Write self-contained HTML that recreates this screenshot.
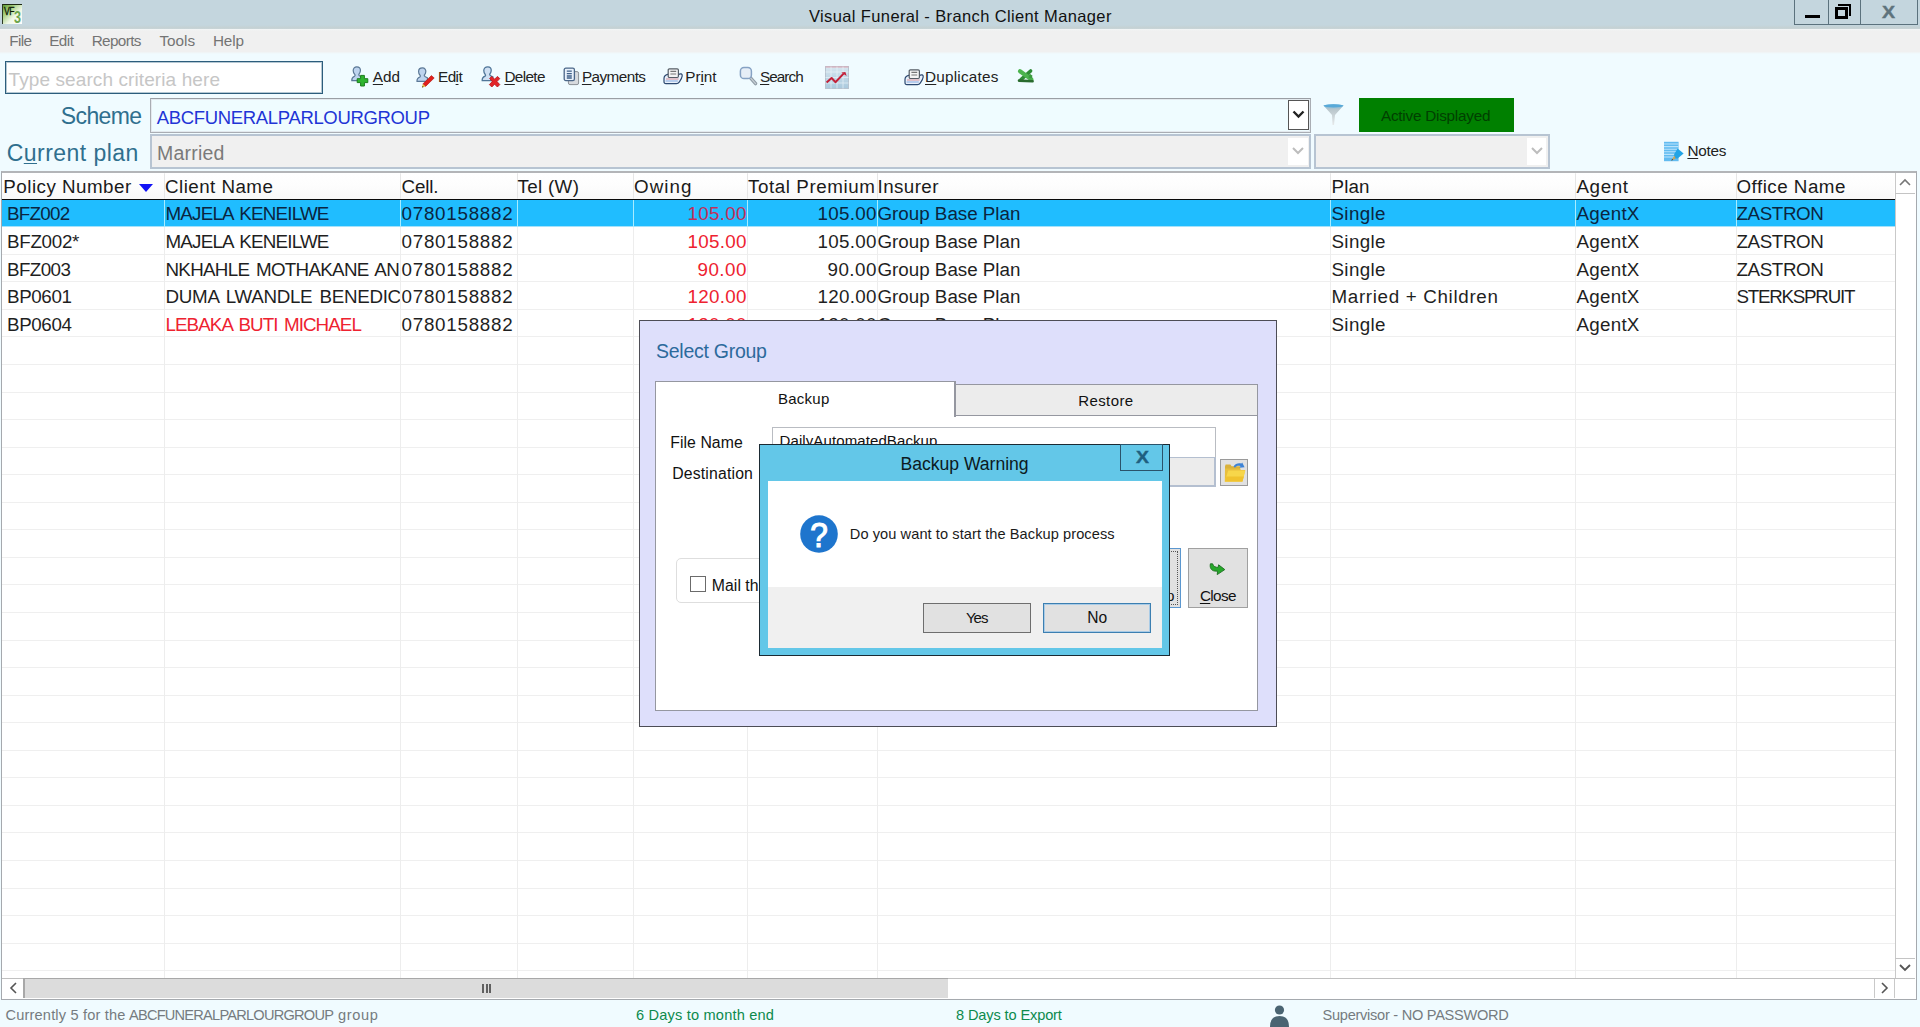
<!DOCTYPE html>
<html lang="en">
<head>
<meta charset="utf-8">
<title>Visual Funeral - Branch Client Manager</title>
<style>
*{box-sizing:border-box;margin:0;padding:0}
html,body{width:1920px;height:1027px;overflow:hidden;background:#f0fbff;font-family:"Liberation Sans",sans-serif}
#app{position:absolute;left:0;top:0;width:1920px;height:1027px;overflow:hidden;background:#f0fbff}
.a{position:absolute}
.t{position:absolute;white-space:nowrap;font-family:"Liberation Sans",sans-serif}
.t u{text-decoration:underline;text-underline-offset:2px;text-decoration-thickness:1px}
svg{position:absolute;overflow:visible}
</style>
</head>
<body>
<div id="app">
<!-- title bar -->
<div class="a" style="left:0;top:0;width:1920px;height:29px;background:linear-gradient(#c4d6de 0,#c4d6de 86%,#c5d1d3 96%,#c9d6d9 100%)"></div>
<div class="a" style="left:0;top:29px;width:1920px;height:25px;background:linear-gradient(#f3f6f7 0,#f0f0f0 8%,#f0f0f0 90%,#f0fbff 100%)"></div>
<!-- window controls -->
<div class="a" style="left:1794px;top:-1px;width:124px;height:26px;border:1px solid #5b727d"></div>
<div class="a" style="left:1828px;top:0;width:1px;height:24px;background:#5b727d"></div>
<div class="a" style="left:1860px;top:0;width:1px;height:24px;background:#5b727d"></div>
<div class="a" style="left:1805px;top:15px;width:15px;height:3px;background:#000"></div>
<div class="a" style="left:1838px;top:4px;width:13px;height:12px;border-top:2px solid #000;border-right:2px solid #000"></div>
<div class="a" style="left:1835px;top:7px;width:13px;height:12px;border:3px solid #000;background:#c4d6de"></div>
<span class="t" style="left:1878px;top:3px;width:21px;text-align:center;font-size:16.8px;line-height:20px;font-weight:700;color:#5e737c;-webkit-text-stroke:0.4px #5e737c;transform:scaleX(1.17)">X</span>
<!-- app icon -->
<div class="a" style="left:2px;top:4px;width:20px;height:20px;background:linear-gradient(135deg,#5f9d33 0,#a9d083 30%,#eef7e6 60%,#ffffff 100%);border-top:1px solid #1d2a14;border-left:1px solid #2d3a24"></div>
<span class="t" style="left:3.8px;top:4.6px;font-size:11.6px;line-height:11px;font-weight:400;color:#0c1a06;letter-spacing:-0.5px;-webkit-text-stroke:0.35px #0c1a06;transform:scaleX(0.74);transform-origin:0 0">VF</span>
<span class="t" style="left:14.2px;top:9.6px;font-size:16.6px;line-height:16px;font-weight:700;color:#6da64d;transform:scaleX(0.76);transform-origin:0 0">3</span>

<!-- search box -->
<div class="a" style="left:5px;top:61px;width:318px;height:33px;background:#fff;border:1px solid #2c5d7c;box-shadow:inset 0 0 0 1px rgba(60,110,140,0.38)"></div>

<!-- Scheme combobox -->
<div class="a" style="left:150px;top:98px;width:1161px;height:35px;background:#effcff;border:1px solid #a9adb3;border-top-color:#9a9ea4;box-shadow:inset 0 0 0 1px #e3e9ee"></div>
<div class="a" style="left:1288px;top:100px;width:21px;height:30px;background:#fff;border:1px solid #555"></div>
<svg style="left:1292px;top:110px" width="13" height="9" viewBox="0 0 13 9"><path d="M1.5 1.5 L6.5 6.5 L11.5 1.5" stroke="#222" stroke-width="2.4" fill="none"/></svg>
<!-- filter icon -->
<svg style="left:1323px;top:104px" width="21" height="22" viewBox="0 0 21 22"><defs><linearGradient id="fg" x1="0" y1="0" x2="0" y2="1"><stop offset="0" stop-color="#6fb7dd"/><stop offset="0.25" stop-color="#b9c6cc"/><stop offset="1" stop-color="#e6e9ea"/></linearGradient></defs><path d="M0.5 1.5 Q10.5 -1 20.5 1.5 L12 11 L11 21 L9.5 21 L9 11 Z" fill="url(#fg)"/><ellipse cx="10.5" cy="1.8" rx="10" ry="1.6" fill="#58a9d8"/></svg>
<!-- active displayed -->
<div class="a" style="left:1359px;top:98px;width:155px;height:34px;background:#008000"></div>

<!-- Current plan combobox -->
<div class="a" style="left:150px;top:134px;width:1161px;height:35px;background:#f0f0f0;border:2px solid #b7c4d2"></div>
<div class="a" style="left:1288px;top:138px;width:20px;height:27px;background:#fff"></div>
<svg style="left:1292px;top:147px" width="12" height="8" viewBox="0 0 12 8"><path d="M1 1 L6 6 L11 1" stroke="#bdbdbd" stroke-width="2" fill="none"/></svg>
<div class="a" style="left:1314px;top:134px;width:236px;height:35px;background:#f0f0f0;border:2px solid #b7c4d2"></div>
<div class="a" style="left:1527px;top:138px;width:19px;height:27px;background:#fff"></div>
<svg style="left:1531px;top:147px" width="12" height="8" viewBox="0 0 12 8"><path d="M1 1 L6 6 L11 1" stroke="#bdbdbd" stroke-width="2" fill="none"/></svg>

<!-- grid -->
<div class="a" id="grid" style="left:1px;top:171px;width:1916px;height:829px;background:#fff;border:1px solid #a5a9ae;border-top:2px solid #b3b5b8"></div>
<div class="a" style="left:2px;top:173px;width:1892px;height:26px;background:linear-gradient(#ffffff 0,#fdfdfd 50%,#f8f8f8 100%)"></div>
<div class="a" style="left:2px;top:226px;width:1893px;height:1px;background:#efefef"></div>
<div class="a" style="left:2px;top:254px;width:1893px;height:1px;background:#efefef"></div>
<div class="a" style="left:2px;top:281px;width:1893px;height:1px;background:#efefef"></div>
<div class="a" style="left:2px;top:309px;width:1893px;height:1px;background:#efefef"></div>
<div class="a" style="left:2px;top:336px;width:1893px;height:1px;background:#efefef"></div>
<div class="a" style="left:2px;top:364px;width:1893px;height:1px;background:#efefef"></div>
<div class="a" style="left:2px;top:392px;width:1893px;height:1px;background:#efefef"></div>
<div class="a" style="left:2px;top:419px;width:1893px;height:1px;background:#efefef"></div>
<div class="a" style="left:2px;top:447px;width:1893px;height:1px;background:#efefef"></div>
<div class="a" style="left:2px;top:474px;width:1893px;height:1px;background:#efefef"></div>
<div class="a" style="left:2px;top:502px;width:1893px;height:1px;background:#efefef"></div>
<div class="a" style="left:2px;top:529px;width:1893px;height:1px;background:#efefef"></div>
<div class="a" style="left:2px;top:557px;width:1893px;height:1px;background:#efefef"></div>
<div class="a" style="left:2px;top:584px;width:1893px;height:1px;background:#efefef"></div>
<div class="a" style="left:2px;top:612px;width:1893px;height:1px;background:#efefef"></div>
<div class="a" style="left:2px;top:640px;width:1893px;height:1px;background:#efefef"></div>
<div class="a" style="left:2px;top:667px;width:1893px;height:1px;background:#efefef"></div>
<div class="a" style="left:2px;top:695px;width:1893px;height:1px;background:#efefef"></div>
<div class="a" style="left:2px;top:722px;width:1893px;height:1px;background:#efefef"></div>
<div class="a" style="left:2px;top:750px;width:1893px;height:1px;background:#efefef"></div>
<div class="a" style="left:2px;top:777px;width:1893px;height:1px;background:#efefef"></div>
<div class="a" style="left:2px;top:805px;width:1893px;height:1px;background:#efefef"></div>
<div class="a" style="left:2px;top:832px;width:1893px;height:1px;background:#efefef"></div>
<div class="a" style="left:2px;top:860px;width:1893px;height:1px;background:#efefef"></div>
<div class="a" style="left:2px;top:888px;width:1893px;height:1px;background:#efefef"></div>
<div class="a" style="left:2px;top:915px;width:1893px;height:1px;background:#efefef"></div>
<div class="a" style="left:2px;top:943px;width:1893px;height:1px;background:#efefef"></div>
<div class="a" style="left:2px;top:970px;width:1893px;height:1px;background:#efefef"></div>
<div class="a" style="left:164.0px;top:173px;width:1px;height:805px;background:#ededed"></div>
<div class="a" style="left:164.0px;top:174px;width:1px;height:24px;background:#e6e6e6"></div>
<div class="a" style="left:400.0px;top:173px;width:1px;height:805px;background:#ededed"></div>
<div class="a" style="left:400.0px;top:174px;width:1px;height:24px;background:#e6e6e6"></div>
<div class="a" style="left:516.5px;top:173px;width:1px;height:805px;background:#ededed"></div>
<div class="a" style="left:516.5px;top:174px;width:1px;height:24px;background:#e6e6e6"></div>
<div class="a" style="left:633.0px;top:173px;width:1px;height:805px;background:#ededed"></div>
<div class="a" style="left:633.0px;top:174px;width:1px;height:24px;background:#e6e6e6"></div>
<div class="a" style="left:747.0px;top:173px;width:1px;height:805px;background:#ededed"></div>
<div class="a" style="left:747.0px;top:174px;width:1px;height:24px;background:#e6e6e6"></div>
<div class="a" style="left:877.0px;top:173px;width:1px;height:805px;background:#ededed"></div>
<div class="a" style="left:877.0px;top:174px;width:1px;height:24px;background:#e6e6e6"></div>
<div class="a" style="left:1330.0px;top:173px;width:1px;height:805px;background:#ededed"></div>
<div class="a" style="left:1330.0px;top:174px;width:1px;height:24px;background:#e6e6e6"></div>
<div class="a" style="left:1575.0px;top:173px;width:1px;height:805px;background:#ededed"></div>
<div class="a" style="left:1575.0px;top:174px;width:1px;height:24px;background:#e6e6e6"></div>
<div class="a" style="left:1735.5px;top:173px;width:1px;height:805px;background:#ededed"></div>
<div class="a" style="left:1735.5px;top:174px;width:1px;height:24px;background:#e6e6e6"></div>
<!-- selected row -->
<div class="a" style="left:2px;top:199px;width:1893px;height:1px;background:#0a0a0a"></div>
<div class="a" style="left:2px;top:200px;width:1893px;height:26px;background:#20bdff"></div>
<div class="a" style="left:2px;top:226px;width:1893px;height:1px;background:#a4e2fb"></div>
<div class="a" style="left:164.0px;top:200px;width:1px;height:26.5px;background:#a8ecff"></div>
<div class="a" style="left:400.0px;top:200px;width:1px;height:26.5px;background:#a8ecff"></div>
<div class="a" style="left:516.5px;top:200px;width:1px;height:26.5px;background:#a8ecff"></div>
<div class="a" style="left:633.0px;top:200px;width:1px;height:26.5px;background:#a8ecff"></div>
<div class="a" style="left:747.0px;top:200px;width:1px;height:26.5px;background:#a8ecff"></div>
<div class="a" style="left:877.0px;top:200px;width:1px;height:26.5px;background:#a8ecff"></div>
<div class="a" style="left:1330.0px;top:200px;width:1px;height:26.5px;background:#a8ecff"></div>
<div class="a" style="left:1575.0px;top:200px;width:1px;height:26.5px;background:#a8ecff"></div>
<div class="a" style="left:1735.5px;top:200px;width:1px;height:26.5px;background:#a8ecff"></div>
<!-- sort triangle -->
<svg style="left:138.5px;top:184px" width="14" height="8" viewBox="0 0 14 8"><path d="M0 0 L14 0 L7 8 Z" fill="#1212f5"/></svg>
<!-- v scrollbar -->
<div class="a" style="left:1895px;top:173px;width:20px;height:806px;background:#fff;border-left:1px solid #c9c9c9"></div>
<div class="a" style="left:1895px;top:193px;width:20px;height:1px;background:#c4c4c4"></div>
<div class="a" style="left:1895px;top:958px;width:20px;height:1px;background:#c4c4c4"></div>
<svg style="left:1899px;top:178px" width="12" height="8" viewBox="0 0 12 8"><path d="M1 7 L6 2 L11 7" stroke="#777" stroke-width="1.6" fill="none"/></svg>
<svg style="left:1899px;top:964px" width="12" height="8" viewBox="0 0 12 8"><path d="M1 1 L6 6 L11 1" stroke="#555" stroke-width="1.8" fill="none"/></svg>
<!-- h scrollbar -->
<div class="a" style="left:2px;top:978px;width:1913px;height:1px;background:#c0c0c0"></div>
<div class="a" style="left:2px;top:979px;width:1893px;height:19px;background:#fff"></div>
<div class="a" style="left:23px;top:978px;width:925px;height:20px;background:#dcdcdc;border-left:2px solid #a8a8a8;border-top:1px solid #a8a8a8"></div>
<div class="a" style="left:1874px;top:979px;width:1px;height:19px;background:#c9c9c9"></div>
<div class="a" style="left:1894px;top:979px;width:1px;height:19px;background:#c9c9c9"></div>
<svg style="left:9px;top:982px" width="8" height="12" viewBox="0 0 8 12"><path d="M7 1 L2 6 L7 11" stroke="#555" stroke-width="1.6" fill="none"/></svg>
<svg style="left:1881px;top:982px" width="8" height="12" viewBox="0 0 8 12"><path d="M1 1 L6 6 L1 11" stroke="#555" stroke-width="1.6" fill="none"/></svg>
<div class="a" style="left:482px;top:984px;width:2px;height:9px;background:#606060"></div>
<div class="a" style="left:485.5px;top:984px;width:2px;height:9px;background:#606060"></div>
<div class="a" style="left:489px;top:984px;width:2px;height:9px;background:#606060"></div>
<!-- status user icon -->
<svg style="left:1270px;top:1005px" width="19" height="22" viewBox="0 0 19 22"><circle cx="9.5" cy="5" r="4.6" fill="#4a6472"/><path d="M0 22 Q0 11 9.5 11 Q19 11 19 22 Z" fill="#4a6472"/></svg>
<!-- Add icon -->
<svg style="left:351px;top:66px" width="19" height="22" viewBox="0 0 19 22">
<path d="M5.8 0.8 C8.3 0.8 9.6 2.6 9.4 4.8 C9.3 6.6 8.4 7.6 7.8 8.4 C7.6 9.4 8.6 10.2 10.6 11 L10.6 14.6 L0.8 14.6 C0.6 12.4 1.2 11.2 3.6 10.2 C4.2 9.6 4.2 8.8 3.6 8.2 C2.8 7.4 2.2 6.2 2.2 4.6 C2.2 2.4 3.6 0.8 5.8 0.8 Z" fill="#bdd3ee" stroke="#5b7896" stroke-width="1.2"/>
<path d="M9.6 9.4 h3.8 v3.3 h3.4 v3.9 h-3.4 v3.4 h-3.8 v-3.4 h-3.4 v-3.9 h3.4 Z" fill="#2fb52f" stroke="#1c7d1c" stroke-width="1" stroke-linejoin="round"/>
</svg>
<!-- Edit icon -->
<svg style="left:416px;top:67px" width="19" height="21" viewBox="0 0 19 21">
<path d="M6.4 0.9 C8.8 0.9 10 2.6 9.8 4.7 C9.7 6.4 8.9 7.4 8.3 8.1 C8.1 9.1 9.1 9.9 11.4 10.8 L11.4 14.4 L1 14.4 C0.8 12.2 1.4 11 3.9 10 C4.5 9.4 4.5 8.6 3.9 8 C3.1 7.2 2.6 6 2.6 4.5 C2.6 2.4 4 0.9 6.4 0.9 Z" fill="#bdd3ee" stroke="#5b7896" stroke-width="1.2"/>
<path d="M15.4 8.6 L18.2 11 L9.6 19.4 L6.8 17 Z" fill="#e0201c" stroke="#b01410" stroke-width="0.6"/>
<path d="M6.8 17 L9.6 19.4 L6 20.6 Z" fill="#f0c040"/>
<path d="M6 20.6 L6.6 19 L7.6 19.9 Z" fill="#222"/>
</svg>
<!-- Delete icon -->
<svg style="left:481px;top:66px" width="20" height="23" viewBox="0 0 20 23">
<path d="M6.8 0.8 C9.2 0.8 10.4 2.6 10.2 4.7 C10.1 6.4 9.3 7.4 8.7 8.1 C8.5 9.1 9.5 9.9 11.8 10.8 L11.8 14.6 L1.2 14.6 C1 12.4 1.6 11.2 4.1 10.2 C4.7 9.6 4.7 8.8 4.1 8.2 C3.3 7.4 2.8 6.2 2.8 4.6 C2.8 2.4 4.2 0.8 6.8 0.8 Z" fill="#cfe0f3" stroke="#4f7598" stroke-width="1.3"/>
<path d="M8.6 12.4 L10.8 10.4 L13.6 13.2 L16.4 10.4 L18.8 12.6 L16 15.6 L18.8 18.6 L16.4 21 L13.6 18.2 L10.8 21 L8.4 18.6 L11.2 15.6 Z" fill="#e22428" stroke="#b8141a" stroke-width="0.8" stroke-linejoin="round"/>
</svg>
<!-- Payments icon -->
<svg style="left:563px;top:67px" width="17" height="19" viewBox="0 0 17 19">
<rect x="5.4" y="4.6" width="10.2" height="13" rx="1.6" fill="#d7dade" stroke="#8b9096" stroke-width="1"/>
<rect x="1.2" y="1.2" width="10.2" height="12.4" rx="1.6" fill="#e8f1fb" stroke="#4a6688" stroke-width="1.3"/>
<path d="M3.8 4.2 h5 M3.8 6.6 h5 M3.8 9 h5 M3.8 11 h5" stroke="#3e5f88" stroke-width="1.3"/>
</svg>
<!-- Print icon -->
<svg style="left:663px;top:68px" width="20" height="17" viewBox="0 0 20 17">
<path d="M1 10.4 C1 8.2 2.4 7 4.6 6.4 L15.4 6.4 C17.8 5.2 19.4 5.8 19.2 8 C19 10 18 11.6 16.4 13.8 C15.6 15 14.8 15.6 13.4 15.6 L3 15.6 C1.6 15.6 1 14.8 1 13.4 Z" fill="#e9f1fb" stroke="#2c4870" stroke-width="1.2"/>
<rect x="5.2" y="0.9" width="10.2" height="8.6" rx="1.2" fill="#f4f4f4" stroke="#555d66" stroke-width="1.2"/>
<path d="M7.4 3.4 h5.8 M7.4 6 h5.8" stroke="#777" stroke-width="1.1"/>
<path d="M3 11 L15.6 11" stroke="#d9a0a8" stroke-width="1.2"/>
<path d="M2.6 13 L14.8 13" stroke="#a8c4ea" stroke-width="1.6"/>
</svg>
<!-- Search icon -->
<svg style="left:739px;top:66px" width="19" height="20" viewBox="0 0 19 20">
<path d="M10.4 10.6 L16.6 17.6" stroke="#8e9aa4" stroke-width="3.4" stroke-linecap="round"/>
<path d="M10.4 10.6 L16.6 17.6" stroke="#c6ced4" stroke-width="1.4" stroke-linecap="round"/>
<rect x="1.4" y="1.6" width="11" height="11" rx="3.6" fill="#e6eef7" stroke="#86a2c4" stroke-width="1.5"/>
</svg>
<!-- Chart icon -->
<svg style="left:825px;top:66px" width="24" height="23" viewBox="0 0 24 23">
<defs><linearGradient id="cg" x1="0" y1="0" x2="0" y2="1"><stop offset="0" stop-color="#d7e6ef"/><stop offset="1" stop-color="#a9c9dd"/></linearGradient></defs>
<rect x="0.5" y="0.5" width="23" height="22" fill="url(#cg)" stroke="#b7c3cf" stroke-width="1"/>
<path d="M0.5 1 h23" stroke="#e0a6b2" stroke-width="1"/>
<path d="M6 0.5 v22 M12 0.5 v22 M18 0.5 v22 M0.5 6 h23 M0.5 11.5 h23 M0.5 17 h23" stroke="#eef5fa" stroke-width="0.8" opacity="0.8"/>
<path d="M1.6 16.6 L6.6 12 L10.4 16.2 L18.6 7.6" stroke="#c32038" stroke-width="2" fill="none" stroke-linejoin="round"/>
<path d="M16.4 6.6 L20.4 6 L21.6 10 Z" fill="#c32038"/>
</svg>
<!-- Duplicates printer -->
<svg style="left:903.5px;top:68.5px" width="20" height="17" viewBox="0 0 20 17">
<path d="M1 10.4 C1 8.2 2.4 7 4.6 6.4 L15.4 6.4 C17.8 5.2 19.4 5.8 19.2 8 C19 10 18 11.6 16.4 13.8 C15.6 15 14.8 15.6 13.4 15.6 L3 15.6 C1.6 15.6 1 14.8 1 13.4 Z" fill="#e9f1fb" stroke="#2c4870" stroke-width="1.2"/>
<rect x="5.2" y="0.9" width="10.2" height="8.6" rx="1.2" fill="#f4f4f4" stroke="#555d66" stroke-width="1.2"/>
<path d="M7.4 3.4 h5.8 M7.4 6 h5.8" stroke="#777" stroke-width="1.1"/>
<path d="M3 11 L15.6 11" stroke="#d9a0a8" stroke-width="1.2"/>
<path d="M2.6 13 L14.8 13" stroke="#a8c4ea" stroke-width="1.6"/>
</svg>
<!-- Excel icon -->
<svg style="left:1017px;top:69px" width="18" height="15" viewBox="0 0 18 15">
<path d="M13.6 2 L4 10.6" stroke="#2e8b36" stroke-width="3.6" stroke-linecap="round"/>
<path d="M3 2.2 L14.4 10.4" stroke="#4cb44e" stroke-width="4.2" stroke-linecap="round"/>
<path d="M12.2 5.6 L15 7.6 M11.6 8.2 L15.2 8.2" stroke="#3c9a40" stroke-width="2"/>
<path d="M2 11.6 L15.6 12.2" stroke="#2a6b2e" stroke-width="2.6" stroke-linecap="round"/>
</svg>
<!-- Notes icon -->
<svg style="left:1663px;top:141px" width="22" height="21" viewBox="0 0 22 21">
<rect x="1" y="0.8" width="14.6" height="19.4" fill="#62bbf0"/>
<path d="M1 3 h14.6 M1 5.6 h14.6 M1 8.2 h14.6 M1 10.8 h14.6 M1 13.4 h14.6 M1 16 h14.6" stroke="#b9e3fb" stroke-width="1.1"/>
<path d="M14.6 7.4 L20.6 12.6 L14.6 17.6 L11 17.6 L11 13.6 Z" fill="#22a4e6"/>
<path d="M11.6 14.6 L8.2 19.6 L12.6 17.8 Z" fill="#c9a45a"/>
<path d="M8.2 19.6 L9.2 18 L10 18.9 Z" fill="#222"/>
</svg>

<span class="t" style="left:809.0px;top:5.8px;font-size:16.5px;line-height:21px;letter-spacing:0.373px;color:#111;">Visual Funeral - Branch Client Manager</span>
<span class="t" style="left:9.2px;top:31.0px;font-size:15.3px;line-height:20px;letter-spacing:-0.649px;color:#747474;">File</span>
<span class="t" style="left:49.2px;top:31.0px;font-size:15.3px;line-height:20px;letter-spacing:-0.553px;color:#747474;">Edit</span>
<span class="t" style="left:91.7px;top:31.0px;font-size:15.3px;line-height:20px;letter-spacing:-0.627px;color:#747474;">Reports</span>
<span class="t" style="left:159.4px;top:31.0px;font-size:15.3px;line-height:20px;letter-spacing:0.023px;color:#747474;">Tools</span>
<span class="t" style="left:213.0px;top:31.0px;font-size:15.3px;line-height:20px;letter-spacing:-0.187px;color:#747474;">Help</span>
<span class="t" style="left:8.5px;top:67.2px;font-size:19px;line-height:25px;letter-spacing:0.100px;color:#c6c6c6;">Type search criteria here</span>
<span class="t" style="left:372.8px;top:66.7px;font-size:15.3px;line-height:20px;letter-spacing:-0.009px;color:#222;"><u>A</u>dd</span>
<span class="t" style="left:438.0px;top:66.7px;font-size:15.3px;line-height:20px;letter-spacing:-0.553px;color:#222;">Ed<u>i</u>t</span>
<span class="t" style="left:504.4px;top:66.7px;font-size:15.3px;line-height:20px;letter-spacing:-0.644px;color:#222;"><u>D</u>elete</span>
<span class="t" style="left:581.9px;top:66.7px;font-size:15.3px;line-height:20px;letter-spacing:-0.559px;color:#222;"><u>P</u>ayments</span>
<span class="t" style="left:685.2px;top:66.7px;font-size:15.3px;line-height:20px;letter-spacing:-0.013px;color:#222;">Pr<u>i</u>nt</span>
<span class="t" style="left:760.0px;top:66.7px;font-size:15.3px;line-height:20px;letter-spacing:-0.954px;color:#222;"><u>S</u>earch</span>
<span class="t" style="left:925.0px;top:66.7px;font-size:15.3px;line-height:20px;letter-spacing:0.220px;color:#222;"><u>D</u>uplicates</span>
<span class="t" style="left:1687.4px;top:140.9px;font-size:15.3px;line-height:20px;letter-spacing:-0.240px;color:#222;"><u>N</u>otes</span>
<span class="t" style="left:60.8px;top:101.0px;font-size:23px;line-height:30px;letter-spacing:-0.615px;color:#2f6f8e;">Scheme</span>
<span class="t" style="left:6.7px;top:137.5px;font-size:23px;line-height:30px;letter-spacing:0.467px;color:#2f6f8e;">C<u>u</u>rrent plan</span>
<span class="t" style="left:156.7px;top:105.5px;font-size:18.5px;line-height:24px;letter-spacing:-0.333px;color:#1f35d6;">ABCFUNERALPARLOURGROUP</span>
<span class="t" style="left:157.0px;top:141.0px;font-size:19.5px;line-height:25px;letter-spacing:0.217px;color:#7a7a7a;">Married</span>
<span class="t" style="left:1381.0px;top:105.5px;font-size:15.3px;line-height:20px;letter-spacing:-0.245px;color:#003f00;">Active Displayed</span>
<span class="t" style="left:3.3px;top:175.0px;font-size:18.8px;line-height:24px;letter-spacing:0.482px;color:#1a1a1a;">Policy Number</span>
<span class="t" style="left:165.0px;top:175.0px;font-size:18.8px;line-height:24px;letter-spacing:0.457px;color:#1a1a1a;">Client Name</span>
<span class="t" style="left:401.5px;top:175.0px;font-size:18.8px;line-height:24px;letter-spacing:-0.168px;color:#1a1a1a;">Cell.</span>
<span class="t" style="left:517.5px;top:175.0px;font-size:18.8px;line-height:24px;letter-spacing:0.323px;color:#1a1a1a;">Tel (W)</span>
<span class="t" style="left:634.0px;top:175.0px;font-size:18.8px;line-height:24px;letter-spacing:1.041px;color:#1a1a1a;">Owing</span>
<span class="t" style="left:748.0px;top:175.0px;font-size:18.8px;line-height:24px;letter-spacing:0.573px;color:#1a1a1a;">Total Premium</span>
<span class="t" style="left:877.5px;top:175.0px;font-size:18.8px;line-height:24px;letter-spacing:0.408px;color:#1a1a1a;">Insurer</span>
<span class="t" style="left:1331.5px;top:175.0px;font-size:18.8px;line-height:24px;letter-spacing:0.103px;color:#1a1a1a;">Plan</span>
<span class="t" style="left:1576.5px;top:175.0px;font-size:18.8px;line-height:24px;letter-spacing:0.580px;color:#1a1a1a;">Agent</span>
<span class="t" style="left:1736.5px;top:175.0px;font-size:18.8px;line-height:24px;letter-spacing:0.487px;color:#1a1a1a;">Office Name</span>
<span class="t" style="left:7.0px;top:202.4px;font-size:18.8px;line-height:24px;letter-spacing:-0.721px;color:#0b2540;">BFZ002</span>
<span class="t" style="left:165.5px;top:202.4px;font-size:18.8px;line-height:24px;letter-spacing:-0.803px;color:#0b2540;word-spacing:2.2px;width:234px;overflow:hidden;">MAJELA KENEILWE</span>
<span class="t" style="left:401.5px;top:202.4px;font-size:18.8px;line-height:24px;letter-spacing:0.750px;color:#0b2540;">0780158882</span>
<span class="t" style="left:687.5px;top:202.4px;font-size:18.8px;line-height:24px;letter-spacing:0.291px;color:#c2305a;">105.00</span>
<span class="t" style="left:817.5px;top:202.4px;font-size:18.8px;line-height:24px;letter-spacing:0.291px;color:#0b2540;">105.00</span>
<span class="t" style="left:877.5px;top:202.4px;font-size:18.8px;line-height:24px;letter-spacing:-0.009px;color:#0b2540;">Group Base Plan</span>
<span class="t" style="left:1331.5px;top:202.4px;font-size:18.8px;line-height:24px;letter-spacing:0.338px;color:#0b2540;">Single</span>
<span class="t" style="left:1576.5px;top:202.4px;font-size:18.8px;line-height:24px;letter-spacing:0.258px;color:#0b2540;">AgentX</span>
<span class="t" style="left:1736.5px;top:202.4px;font-size:18.8px;line-height:24px;letter-spacing:-0.389px;color:#0b2540;">ZASTRON</span>
<span class="t" style="left:7.0px;top:230.0px;font-size:18.8px;line-height:24px;letter-spacing:-0.286px;color:#1f1f1f;">BFZ002*</span>
<span class="t" style="left:165.5px;top:230.0px;font-size:18.8px;line-height:24px;letter-spacing:-0.803px;color:#1f1f1f;word-spacing:2.2px;width:234px;overflow:hidden;">MAJELA KENEILWE</span>
<span class="t" style="left:401.5px;top:230.0px;font-size:18.8px;line-height:24px;letter-spacing:0.750px;color:#1f1f1f;">0780158882</span>
<span class="t" style="left:687.5px;top:230.0px;font-size:18.8px;line-height:24px;letter-spacing:0.291px;color:#ee2230;">105.00</span>
<span class="t" style="left:817.5px;top:230.0px;font-size:18.8px;line-height:24px;letter-spacing:0.291px;color:#1f1f1f;">105.00</span>
<span class="t" style="left:877.5px;top:230.0px;font-size:18.8px;line-height:24px;letter-spacing:-0.009px;color:#1f1f1f;">Group Base Plan</span>
<span class="t" style="left:1331.5px;top:230.0px;font-size:18.8px;line-height:24px;letter-spacing:0.338px;color:#1f1f1f;">Single</span>
<span class="t" style="left:1576.5px;top:230.0px;font-size:18.8px;line-height:24px;letter-spacing:0.258px;color:#1f1f1f;">AgentX</span>
<span class="t" style="left:1736.5px;top:230.0px;font-size:18.8px;line-height:24px;letter-spacing:-0.389px;color:#1f1f1f;">ZASTRON</span>
<span class="t" style="left:7.0px;top:257.6px;font-size:18.8px;line-height:24px;letter-spacing:-0.581px;color:#1f1f1f;">BFZ003</span>
<span class="t" style="left:165.5px;top:257.6px;font-size:18.8px;line-height:24px;letter-spacing:-0.704px;color:#1f1f1f;word-spacing:2.2px;width:234px;overflow:hidden;">NKHAHLE MOTHAKANE ANNA</span>
<span class="t" style="left:401.5px;top:257.6px;font-size:18.8px;line-height:24px;letter-spacing:0.750px;color:#1f1f1f;">0780158882</span>
<span class="t" style="left:697.5px;top:257.6px;font-size:18.8px;line-height:24px;letter-spacing:0.475px;color:#ee2230;">90.00</span>
<span class="t" style="left:827.5px;top:257.6px;font-size:18.8px;line-height:24px;letter-spacing:0.475px;color:#1f1f1f;">90.00</span>
<span class="t" style="left:877.5px;top:257.6px;font-size:18.8px;line-height:24px;letter-spacing:-0.009px;color:#1f1f1f;">Group Base Plan</span>
<span class="t" style="left:1331.5px;top:257.6px;font-size:18.8px;line-height:24px;letter-spacing:0.338px;color:#1f1f1f;">Single</span>
<span class="t" style="left:1576.5px;top:257.6px;font-size:18.8px;line-height:24px;letter-spacing:0.258px;color:#1f1f1f;">AgentX</span>
<span class="t" style="left:1736.5px;top:257.6px;font-size:18.8px;line-height:24px;letter-spacing:-0.389px;color:#1f1f1f;">ZASTRON</span>
<span class="t" style="left:7.0px;top:285.1px;font-size:18.8px;line-height:24px;letter-spacing:-0.387px;color:#1f1f1f;">BP0601</span>
<span class="t" style="left:165.5px;top:285.1px;font-size:18.8px;line-height:24px;letter-spacing:-0.295px;color:#1f1f1f;word-spacing:2.2px;width:234px;overflow:hidden;">DUMA LWANDLE BENEDICT</span>
<span class="t" style="left:401.5px;top:285.1px;font-size:18.8px;line-height:24px;letter-spacing:0.750px;color:#1f1f1f;">0780158882</span>
<span class="t" style="left:687.5px;top:285.1px;font-size:18.8px;line-height:24px;letter-spacing:0.291px;color:#ee2230;">120.00</span>
<span class="t" style="left:817.5px;top:285.1px;font-size:18.8px;line-height:24px;letter-spacing:0.291px;color:#1f1f1f;">120.00</span>
<span class="t" style="left:877.5px;top:285.1px;font-size:18.8px;line-height:24px;letter-spacing:-0.009px;color:#1f1f1f;">Group Base Plan</span>
<span class="t" style="left:1331.5px;top:285.1px;font-size:18.8px;line-height:24px;letter-spacing:0.670px;color:#1f1f1f;">Married + Children</span>
<span class="t" style="left:1576.5px;top:285.1px;font-size:18.8px;line-height:24px;letter-spacing:0.258px;color:#1f1f1f;">AgentX</span>
<span class="t" style="left:1736.5px;top:285.1px;font-size:18.8px;line-height:24px;letter-spacing:-1.259px;color:#1f1f1f;">STERKSPRUIT</span>
<span class="t" style="left:7.0px;top:312.7px;font-size:18.8px;line-height:24px;letter-spacing:-0.387px;color:#1f1f1f;">BP0604</span>
<span class="t" style="left:165.5px;top:312.7px;font-size:18.8px;line-height:24px;letter-spacing:-0.933px;color:#ee2230;word-spacing:2.2px;width:234px;overflow:hidden;">LEBAKA BUTI MICHAEL</span>
<span class="t" style="left:401.5px;top:312.7px;font-size:18.8px;line-height:24px;letter-spacing:0.750px;color:#1f1f1f;">0780158882</span>
<span class="t" style="left:687.5px;top:312.7px;font-size:18.8px;line-height:24px;letter-spacing:0.291px;color:#ee2230;">120.00</span>
<span class="t" style="left:817.5px;top:312.7px;font-size:18.8px;line-height:24px;letter-spacing:0.291px;color:#1f1f1f;">120.00</span>
<span class="t" style="left:877.5px;top:312.7px;font-size:18.8px;line-height:24px;letter-spacing:-0.009px;color:#1f1f1f;">Group Base Plan</span>
<span class="t" style="left:1331.5px;top:312.7px;font-size:18.8px;line-height:24px;letter-spacing:0.338px;color:#1f1f1f;">Single</span>
<span class="t" style="left:1576.5px;top:312.7px;font-size:18.8px;line-height:24px;letter-spacing:0.258px;color:#1f1f1f;">AgentX</span>
<span class="t" style="left:5.5px;top:1005.5px;font-size:14.6px;line-height:19px;letter-spacing:0.172px;color:#757b80;">Currently 5 for the</span>
<span class="t" style="left:129.0px;top:1005.5px;font-size:14.6px;line-height:19px;letter-spacing:-0.772px;color:#757b80;">ABCFUNERALPARLOURGROUP</span>
<span class="t" style="left:338.0px;top:1005.5px;font-size:14.6px;line-height:19px;letter-spacing:0.644px;color:#757b80;">group</span>
<span class="t" style="left:636.0px;top:1005.5px;font-size:14.6px;line-height:19px;letter-spacing:0.180px;color:#0c8a4d;">6 Days to month end</span>
<span class="t" style="left:956.0px;top:1005.5px;font-size:14.6px;line-height:19px;letter-spacing:-0.132px;color:#0c8a4d;">8 Days to Export</span>
<span class="t" style="left:1322.5px;top:1005.5px;font-size:14.6px;line-height:19px;letter-spacing:-0.275px;color:#757b80;">Supervisor - NO PASSWORD</span>

<!-- Select Group dialog -->
<div class="a" style="left:639px;top:320px;width:638px;height:407px;background:#dedffb;border:1px solid #4d4d55"></div>
<div class="a" style="left:655px;top:415px;width:603px;height:296px;background:#fff;border:1px solid #9597a0"></div>
<div class="a" style="left:955px;top:384px;width:303px;height:32px;background:#ececec;border:1px solid #9597a0"></div>
<div class="a" style="left:655px;top:381px;width:301px;height:36px;background:#fff;border:1px solid #9597a0;border-bottom:none;border-right:2px solid #9597a0"></div>
<!-- inputs -->
<div class="a" style="left:772px;top:427px;width:444px;height:31px;background:#fff;border:1px solid #b9bcc2"></div>
<div class="a" style="left:772px;top:457px;width:444px;height:30px;background:#ececec;border:1px solid #b4bfd0;border-width:1px 2px 2px 1px"></div>
<div class="a" style="left:1220px;top:459px;width:28px;height:27px;background:#e1e1e1;border:1px solid #9a9a9a"></div>
<svg style="left:1224px;top:462px" width="22" height="21" viewBox="0 0 22 21">
<path d="M1 4.6 L1.6 2.6 L6.4 2.6 L7.6 4.2 L16 4.2 L16 8 L1 8 Z" fill="#d9b13a"/>
<path d="M9.6 4.4 C11.2 1.6 14.6 0.6 17.4 1.6 L18.2 0.4 L20.6 5.2 L15.6 5.8 L16.4 4.2 C14.4 3.4 12.2 4 11 5.8 Z" fill="#3d83d6"/>
<path d="M0.8 19.6 L1 6.4 L16.6 6.4 L16.6 8 L21.2 8 L18.4 19.6 Z" fill="#e8bf3c"/>
<path d="M0.8 19.6 L4.2 8.6 L21.4 8.6 L18.4 19.6 Z" fill="#f7d64a"/>
<path d="M0.8 19.6 L2.4 14.4 L19.8 14.4 L18.4 19.6 Z" fill="#f0c22e"/>
</svg>
<!-- group box -->
<div class="a" style="left:676px;top:558px;width:200px;height:45px;background:#fff;border:1px solid #dedede;border-radius:5px"></div>
<div class="a" style="left:690px;top:576px;width:16px;height:16px;background:#fff;border:1px solid #6b6b6b"></div>
<!-- backup button (mostly hidden) + close button -->
<div class="a" style="left:1110px;top:548px;width:71px;height:60px;background:#e1e1e1;border:1px solid #5b97cf"></div>
<div class="a" style="left:1113px;top:551px;width:65px;height:54px;border:1px dotted #555"></div>
<div class="a" style="left:1188px;top:548px;width:60px;height:60px;background:#e1e1e1;border:1px solid #a0a0a0"></div>
<svg style="left:1209px;top:563px" width="17" height="14" viewBox="0 0 17 14">
<path d="M1.4 0.8 C0.6 4.4 2 7.4 5.4 8 L8.6 8.2 L8.2 11.6 L15.8 6.6 L9.6 1.8 L9.2 4.4 C6.6 4.4 4.4 3.6 3.6 0.8 Z" fill="#27a82b" stroke="#1c6e20" stroke-width="0.9" stroke-linejoin="round"/>
</svg>
<span class="t" style="left:656.0px;top:338.5px;font-size:19.5px;line-height:25px;letter-spacing:-0.265px;color:#2c6a9c;">Select Group</span>
<span class="t" style="left:778.0px;top:388.5px;font-size:15px;line-height:20px;letter-spacing:0.254px;color:#111;">Backup</span>
<span class="t" style="left:1078.2px;top:391.0px;font-size:15px;line-height:20px;letter-spacing:0.413px;color:#111;">Restore</span>
<span class="t" style="left:670.3px;top:431.5px;font-size:15.8px;line-height:21px;letter-spacing:0.052px;color:#111;">File Name</span>
<span class="t" style="left:672.2px;top:463.0px;font-size:15.8px;line-height:21px;letter-spacing:0.167px;color:#111;">Destination</span>
<span class="t" style="left:779.5px;top:431.0px;font-size:15px;line-height:20px;letter-spacing:0.104px;color:#111;">DailyAutomatedBackup</span>
<span class="t" style="left:711.8px;top:574.5px;font-size:15.8px;line-height:21px;letter-spacing:0.043px;color:#111;">Mail this backup</span>
<span class="t" style="left:1128.0px;top:585.6px;font-size:15.3px;line-height:20px;letter-spacing:-0.924px;color:#111;"><u>B</u>ackup</span>
<span class="t" style="left:1199.9px;top:585.6px;font-size:15.3px;line-height:20px;letter-spacing:-0.652px;color:#111;"><u>C</u>lose</span>

<!-- Backup warning -->
<div class="a" style="left:759px;top:444px;width:411px;height:212px;background:#63c7e8;border:1px solid #1b2a33"></div>
<div class="a" style="left:768px;top:481px;width:394px;height:106px;background:#fff"></div>
<div class="a" style="left:768px;top:587px;width:394px;height:61px;background:#f0f0f0"></div>
<div class="a" style="left:1120px;top:444px;width:43px;height:27px;border:1px solid #2a536b;background:#63c7e8"></div>
<span class="t" style="left:1132px;top:448px;width:21px;text-align:center;font-size:16.6px;line-height:20px;font-weight:700;color:#1f5f80;-webkit-text-stroke:0.4px #1f5f80;transform:scaleX(1.17)">X</span>
<div class="a" style="left:923px;top:603px;width:108px;height:30px;background:#e1e1e1;border:1px solid #6e6e6e"></div>
<div class="a" style="left:1043px;top:603px;width:108px;height:30px;background:#e1e1e1;border:1px solid #3c7fb1;box-shadow:inset 0 0 0 1px #a9cbe6"></div>
<svg style="left:800px;top:514.6px" width="38" height="38" viewBox="0 0 38 38"><circle cx="19" cy="19" r="18.8" fill="#1e75cd"/></svg>
<span class="t" style="left:800px;top:515.8px;width:38px;text-align:center;font-size:35px;line-height:38px;font-weight:400;color:#fff;-webkit-text-stroke:1.2px #fff;transform:scaleX(0.9)">?</span>
<span class="t" style="left:900.6px;top:452.8px;font-size:17.6px;line-height:23px;letter-spacing:-0.033px;color:#0c1a22;">Backup Warning</span>
<span class="t" style="left:849.8px;top:524.6px;font-size:14.6px;line-height:19px;letter-spacing:0.073px;color:#1a1a1a;">Do you want to start the Backup process</span>
<span class="t" style="left:966.0px;top:607.5px;font-size:15px;line-height:20px;letter-spacing:-1.035px;color:#111;">Yes</span>
<span class="t" style="left:1087.2px;top:607.5px;font-size:15.6px;line-height:20px;letter-spacing:0.000px;color:#111;">No</span>
</div>
</body>
</html>
